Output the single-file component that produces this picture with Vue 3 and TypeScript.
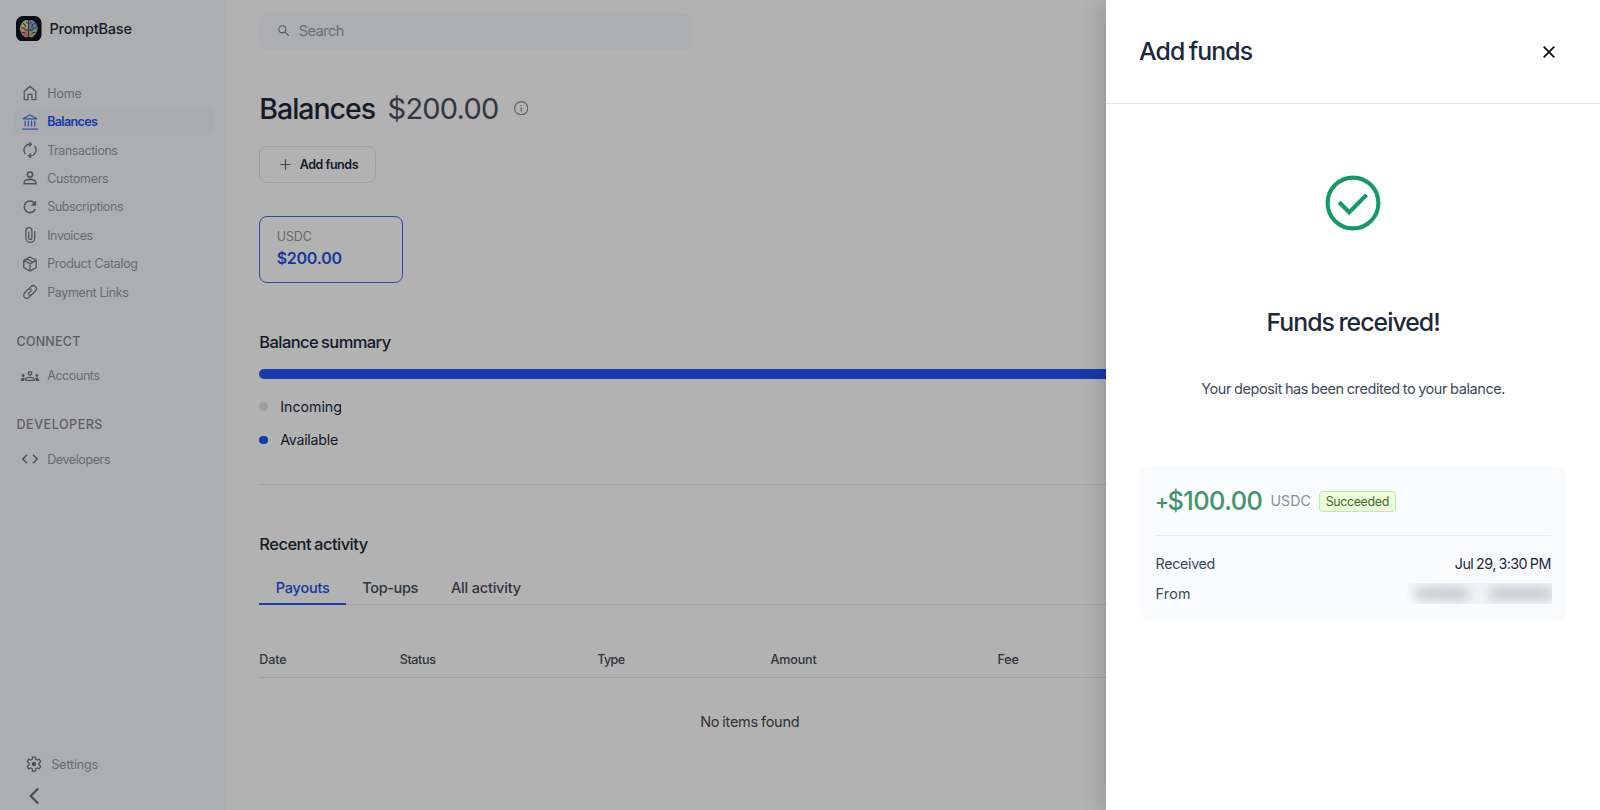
<script setup lang="ts">
interface NavItem {
  label: string
  icon: string
  tracking: number
  active?: boolean
}

const nav: NavItem[] = [
  { label: 'Home', icon: 'home', tracking: -0.1 },
  { label: 'Balances', icon: 'bank', tracking: -0.62, active: true },
  { label: 'Transactions', icon: 'sync', tracking: -0.46 },
  { label: 'Customers', icon: 'person', tracking: -0.34 },
  { label: 'Subscriptions', icon: 'refresh', tracking: -0.39 },
  { label: 'Invoices', icon: 'clip', tracking: -0.42 },
  { label: 'Product Catalog', icon: 'box', tracking: -0.32 },
  { label: 'Payment Links', icon: 'link', tracking: -0.36 },
]

const columns = ['Date', 'Status', 'Type', 'Amount', 'Fee']
const tabs = [
  { label: 'Payouts', tracking: -0.22 },
  { label: 'Top-ups', tracking: -0.38 },
  { label: 'All activity', tracking: -0.18 },
]
</script>

<template>
  <div class="page">
    <aside class="sidebar">
      <div class="brand">
        <svg class="logo" viewBox="0 0 26 26">
          <defs>
            <linearGradient id="brain" x1=".3" y1="0" x2=".6" y2="1">
              <stop offset="0" stop-color="#6fd3b4" />
              <stop offset=".35" stop-color="#e8dc9c" />
              <stop offset=".65" stop-color="#e8b09a" />
              <stop offset="1" stop-color="#ee7a80" />
            </linearGradient>
            <linearGradient id="brain2" x1=".3" y1="0" x2=".6" y2="1">
              <stop offset="0" stop-color="#b59be0" />
              <stop offset=".4" stop-color="#7fa6e0" />
              <stop offset=".65" stop-color="#8fd0a0" />
              <stop offset="1" stop-color="#f0a070" />
            </linearGradient>
          </defs>
          <rect width="26" height="26" rx="7" fill="#12121f" />
          <path d="M12.6 4.4 9.4 4 6.6 6.2 4.8 9.4 3.8 12.6 4.8 16 6.6 19.4 9.4 21.8 12.6 21.4z" fill="url(#brain)" />
          <path d="M13.4 4.4 16.6 4 19.4 6.2 21.2 9.4 22.2 12.6 21.2 16 19.4 19.4 16.6 21.8 13.4 21.4z" fill="url(#brain2)" />
          <path d="M7 7.5l2.4 1.6v2.4M4.6 12.2h3.2l1.6 2.2h2.8M6.2 16.8h2.6l1.2 2M10.2 6.4l2 1.2M18.8 7.5l-2.4 1.6v2.4M21.4 12.2h-3.2l-1.6 2.2h-2.8M19.8 16.8h-2.6l-1.2 2M15.8 6.4l-2 1.2" fill="none" stroke="#1b1b2a" stroke-width=".8" />
        </svg>
        <span>PromptBase</span>
      </div>

      <nav class="nav">
        <a v-for="item in nav" :key="item.label" class="item" :class="{ active: item.active }">
          <svg v-if="item.icon === 'home'" class="ico" viewBox="0 0 16 16"><path d="M2.2 6.3 8 1.4l5.8 4.9v8.3H9.9V9.3H6.1v5.3H2.2z" /></svg>
          <svg v-else-if="item.icon === 'bank'" class="ico" viewBox="0 0 16 16"><path d="M1 4.8 8 1l7 3.8zM3.2 6.8v5.8M6.4 6.8v5.8M9.6 6.8v5.8M12.8 6.8v5.8M.2 15.2h15.6" /></svg>
          <svg v-else-if="item.icon === 'sync'" class="ico" viewBox="0 0 16 16"><path d="M8.8 2.2A6 6 0 0 0 3.4 12M7 0l2.4 2.2L7 4.6M7.2 13.8a6 6 0 0 0 5.4-9.8M9 11.4l-2.4 2.4L9 16" /></svg>
          <svg v-else-if="item.icon === 'person'" class="ico bold" viewBox="0 0 16 16"><circle cx="8" cy="4.6" r="2.6" /><path d="M2.2 13.8v-1.5c0-2 3.6-2.9 5.8-2.9s5.8.9 5.8 2.9v1.5z" /></svg>
          <svg v-else-if="item.icon === 'refresh'" class="ico bold" viewBox="0 0 16 16"><path d="M13.4 10a5.8 5.8 0 1 1-1.2-6.2l1 1" /><path d="M14.1 1.4v5.4H8.7z" class="solid" /></svg>
          <svg v-else-if="item.icon === 'clip'" class="ico" viewBox="0 0 16 16"><path d="M12.4 4v7a4.4 4.4 0 0 1-8.8 0V3.7a3 3 0 0 1 6 0V11a1.6 1.6 0 0 1-3.2 0V4.4" transform="translate(.3)" /></svg>
          <svg v-else-if="item.icon === 'box'" class="ico" viewBox="0 0 16 16"><path d="M8 1 14.2 4.4v7.2L8 15 1.8 11.6V4.4zM1.8 4.4 8 7.8l6.2-3.4M8 7.8V15M4.6 2.9l6.3 3.4" /></svg>
          <svg v-else class="ico" viewBox="0 0 16 16"><path d="M6.7 4.9 9 2.6a3.1 3.1 0 0 1 4.4 4.4L10.2 10.2a3.1 3.1 0 0 1-3.6.5M9.3 11.1 7 13.4A3.1 3.1 0 0 1 2.6 9l3.2-3.2a3.1 3.1 0 0 1 3.6-.5M5.9 10.1l4.2-4.2" /></svg>
          <span :style="{ letterSpacing: item.tracking + 'px' }">{{ item.label }}</span>
        </a>
      </nav>

      <h4 class="group connect">CONNECT</h4>
      <a class="item">
        <svg class="ico wide bold" viewBox="0 0 20 16"><circle cx="10" cy="5.3" r="1.7" /><path d="M5.8 12.4v-.9c0-1.5 2.5-2.1 4.2-2.1s4.2.6 4.2 2.1v.9z" /><path d="M.8 12.9h3.5v-1.6l.7-1.6-2-.2-2.2 1.4zM15.7 12.9h3.5v-2l-2.2-1.4-2 .2.7 1.6z" class="solid" /><circle cx="3.1" cy="7.5" r="1.4" class="solid" /><circle cx="16.9" cy="7.5" r="1.4" class="solid" /></svg>
        <span class="t-acc">Accounts</span>
      </a>
      <h4 class="group devs">DEVELOPERS</h4>
      <a class="item">
        <svg class="ico bold" viewBox="0 0 16 16"><path d="M5 3.8.8 8 5 12.2M11 3.8 15.2 8 11 12.2" /></svg>
        <span class="t-dev">Developers</span>
      </a>

      <div class="foot">
        <a class="settings">
          <svg class="ico" viewBox="0 0 16 16"><path d="M6.6 1h2.8l.4 2.2 1.4.8 2.1-.8 1.4 2.4L13 7.1v1.8l1.7 1.5-1.4 2.4-2.1-.8-1.4.8L9.4 15H6.6l-.4-2.2-1.4-.8-2.1.8-1.4-2.4L3 8.9V7.1L1.3 5.6l1.4-2.4 2.1.8 1.4-.8z" /><circle cx="8" cy="8" r="2.2" class="solid" /></svg>
          <span>Settings</span>
        </a>
        <svg class="collapse" viewBox="0 0 12 18"><path d="M10.2 1.5 2.7 9l7.5 7.5" /></svg>
      </div>
    </aside>

    <main class="main">
      <div class="search">
        <svg viewBox="0 0 12 12"><circle cx="4.5" cy="4.5" r="3.7" /><path d="m7.2 7.2 4.2 4.2" /></svg>
        <span>Search</span>
      </div>

      <div class="title">
        <h1>Balances</h1>
        <span class="total">$200.00</span>
        <svg class="info" viewBox="0 0 14 14"><circle cx="7" cy="7" r="6.4" /><path d="M7 6.1v4M7 3.8v1.1" /></svg>
      </div>

      <button class="add">
        <svg viewBox="0 0 12 12"><path d="M6 .4v11.2M.4 6h11.2" /></svg>
        <span>Add funds</span>
      </button>

      <section class="currency">
        <span class="code">USDC</span>
        <strong>$200.00</strong>
      </section>

      <h2 class="summary">Balance summary</h2>
      <div class="bar"></div>
      <div class="legend"><i class="dot grey"></i><span class="inc">Incoming</span></div>
      <div class="legend"><i class="dot"></i><span class="ava">Available</span></div>

      <hr class="rule" />

      <h2 class="recent">Recent activity</h2>
      <div class="tabs">
        <span v-for="(tab, i) in tabs" :key="tab.label" class="tab" :class="{ on: i === 0 }" :style="{ letterSpacing: tab.tracking + 'px' }">{{ tab.label }}</span>
      </div>

      <div class="thead">
        <span v-for="c in columns" :key="c" :class="'c-' + c.toLowerCase()">{{ c }}</span>
      </div>
      <p class="empty">No items found</p>
    </main>

    <div class="overlay"></div>

    <section class="drawer">
      <header>
        <h2>Add funds</h2>
        <svg viewBox="0 0 12 12"><path d="m.7.7 10.6 10.6M11.3.7.7 11.3" /></svg>
      </header>
      <div class="body">
        <svg class="check" viewBox="0 0 56 56"><circle cx="28" cy="28" r="25.4" /><path d="M14.2 27.3 24.2 37.3 41.6 19.9" /></svg>
        <h3>Funds received!</h3>
        <p class="note">Your deposit has been credited to your balance.</p>
        <div class="receipt">
          <div class="amount">
            <strong><span class="plus">+</span>$100.00</strong>
            <span class="cur">USDC</span>
            <span class="badge">Succeeded</span>
          </div>
          <div class="line">
            <span class="rec">Received</span>
            <span class="when">Jul 29, 3:30 PM</span>
          </div>
          <div class="line">
            <span class="from">From</span>
            <span class="hidden"><i class="b1"></i><i class="b2"></i></span>
          </div>
        </div>
      </div>
    </section>
  </div>
</template>

<style scoped>
.page {
  position: relative;
  display: flex;
  width: 1600px;
  height: 810px;
  overflow: hidden;
  background: #fff;
  color: #1e293b;
  font-family: Inter, "Liberation Sans", sans-serif;
}
.page * { box-sizing: border-box; }
h1, h2, h3, h4, p { margin: 0; font-weight: 500; }
svg { display: block; flex: none; fill: none; stroke: currentColor; }

.sidebar {
  display: flex;
  flex-direction: column;
  width: 227px;
  padding: 15.5px 12.5px 0;
  background: #f8fafc;
  border-right: 1px solid #f5f7f9;
  font-size: 12.5px;
}
.brand {
  display: flex;
  align-items: center;
  gap: 8px;
  height: 26px;
  padding-left: 3.5px;
  font-size: 14.5px;
  font-weight: 500;
  letter-spacing: -0.2px;
  color: #1e293b;
}
.brand span { margin-top: -1px; }
.logo { width: 25.5px; height: 25.5px; stroke: none; }
.nav { display: flex; flex-direction: column; margin-top: 38.6px; }
.item {
  display: flex;
  align-items: center;
  height: 26.4px;
  margin-bottom: 2px;
  padding-left: 9.5px;
  border-radius: 8px;
  color: #969aa1;
}
.item .ico { width: 16px; height: 16px; margin-right: 9.2px; color: #75777a; stroke-width: 1.25; }
.item .ico.bold { stroke-width: 1.6; }
.item .ico.wide { width: 20px; margin: 0 7.2px 0 -2px; stroke-width: 1.4; }
.solid { fill: currentColor; stroke: none; }
.item.active { background: #f2f5fb; color: #2153f5; font-weight: 600; }
.item.active .ico { color: #4b78ea; }
.group { padding-left: 4px; height: 16px; line-height: 16px; font-size: 12.5px; color: #85898f; }
.connect { margin-top: 26.5px; letter-spacing: 0.22px; }
.connect + .item { margin-top: 13px; }
.devs { margin-top: 26px; letter-spacing: 0.55px; }
.devs + .item { margin-top: 13px; }
.t-acc { letter-spacing: -0.42px; }
.t-dev { letter-spacing: -0.4px; }
.foot { margin-top: auto; padding-left: 13.5px; }
.settings { display: flex; align-items: center; gap: 9.5px; color: #969aa1; letter-spacing: -0.18px; }
.settings .ico { width: 16px; height: 16px; color: #6c6e70; stroke-width: 1.25; }
.collapse { width: 12px; height: 18px; margin: 15px 0 5px 2px; color: #6c6c6c; stroke-width: 2.2; }

.main { display: flex; flex-direction: column; align-items: flex-start; width: 1013px; padding: 12.5px 0 0 32.3px; }
.search {
  display: flex;
  align-items: center;
  gap: 9.5px;
  width: 432.5px;
  height: 37px;
  padding: 0 0 1.5px 18.5px;
  border-radius: 8px;
  background: #f6f9fb;
  color: #9b9fa4;
  font-size: 14.5px;
  letter-spacing: -0.5px;
}
.search svg { width: 11.5px; height: 11.5px; color: #7a7c7f; stroke-width: 1.1; }
.title { display: flex; align-items: center; height: 40px; margin-top: 38.5px; }
.title h1 { font-size: 28.5px; letter-spacing: -1.02px; }
.total { margin-left: 12.5px; font-size: 29px; letter-spacing: -0.79px; color: #495060; }
.info { width: 14.5px; height: 14.5px; margin-left: 15.5px; color: #8a8a8c; stroke-width: 1.1; }
.add {
  display: flex;
  align-items: center;
  gap: 8.5px;
  width: 117px;
  height: 37px;
  margin-top: 18px;
  padding: 0 0 0 20px;
  border: 1px solid #e2e4e8;
  border-radius: 8px;
  background: transparent;
  color: #1e293b;
  font: 600 12.5px Inter, sans-serif;
  letter-spacing: -0.44px;
  word-spacing: -0.2px;
}
.add svg { width: 11px; height: 11px; color: #666; stroke-width: 1.3; }
.currency {
  display: flex;
  flex-direction: column;
  width: 144px;
  height: 67px;
  margin-top: 33px;
  padding: 10.9px 16.4px;
  border: 1.5px solid #3d68ee;
  border-radius: 8px;
}
.code { font-size: 12.5px; line-height: 18px; letter-spacing: -0.1px; color: #96999e; }
.currency strong { font-size: 16px; line-height: 25px; font-weight: 600; letter-spacing: -0.25px; color: #2550e0; }
.summary, .recent { font-size: 16.5px; line-height: 24px; word-spacing: -0.8px; }
.summary { margin-top: 47px; letter-spacing: -0.59px; }
.bar { width: 981px; height: 10.5px; margin-top: 14.7px; border-radius: 6px; background: #2153f5; }
.legend { display: flex; align-items: center; gap: 12.4px; height: 20px; font-size: 14.2px; }
.bar + .legend { margin-top: 17.2px; }
.legend + .legend { margin-top: 13.4px; }
.dot { width: 8.5px; height: 8.5px; border-radius: 50%; background: #2153f5; }
.dot.grey { background: #e4e4ea; }
.ava { letter-spacing: -0.24px; }
.rule { width: 981px; height: 1px; margin: 34.1px 0 0; border: 0; background: #e2e4e8; }
.recent { margin-top: 47px; letter-spacing: -0.53px; }
.tabs { display: flex; width: 981px; height: 40px; margin-top: 9px; box-shadow: inset 0 -1px #e2e4e8; }
.tab { height: 40px; padding: 0 16.5px; line-height: 45.5px; font-size: 14.5px; font-weight: 500; color: #464c58; }
.tab.on { width: 86.5px; color: #2550e0; border-bottom: 2px solid #2f5ee8; }
.thead {
  display: grid;
  grid-template-columns: 140.4px 197.5px 173.3px 227px 1fr;
  width: 981px;
  height: 36px;
  margin-top: 37px;
  line-height: 36px;
  border-bottom: 1px solid #e2e4e8;
  font-size: 12.5px;
  font-weight: 500;
  color: #454b57;
  letter-spacing: -0.1px;
}
.c-status { letter-spacing: -0.36px; }
.c-amount { letter-spacing: -0.12px; }
.c-type { letter-spacing: -0.6px; }
.empty { width: 981px; margin-top: 33.8px; text-align: center; font-size: 14.5px; line-height: 20px; font-weight: 400; letter-spacing: -0.24px; word-spacing: -0.9px; color: #414853; }

.overlay { position: absolute; inset: 0; background: rgba(0, 0, 0, 0.3); }

.drawer {
  position: absolute;
  top: 0;
  right: 0;
  bottom: 0;
  width: 494px;
  background: #fff;
  box-shadow: 0 0 24px rgba(0, 0, 0, 0.22);
}
.drawer header {
  display: flex;
  align-items: center;
  justify-content: space-between;
  height: 104px;
  padding: 0 45.5px 1px 33px;
  border-bottom: 1px solid #e5e6e8;
}
.drawer h2, .drawer h3 { font-size: 24.8px; line-height: 32px; word-spacing: -1.2px; }
.drawer h2 { letter-spacing: -0.92px; }
.drawer header svg { width: 12px; height: 12px; margin-top: 1px; color: #0c0c0c; stroke-width: 1.7; }
.body { display: flex; flex-direction: column; align-items: center; padding: 71px 32.7px 0 33px; }
.check { width: 56px; height: 56px; color: #15996a; stroke-width: 4.1; }
.drawer h3 { margin-top: 75px; letter-spacing: -0.97px; }
.note { margin-top: 40px; font-size: 14.5px; line-height: 22px; font-weight: 400; letter-spacing: -0.41px; word-spacing: -0.7px; color: #414a5a; }
.receipt { width: 100%; height: 155px; margin-top: 66px; padding: 0 16.5px; border-radius: 10px; background: #f9fbfd; }
.amount { display: flex; align-items: center; height: 70px; margin-bottom: 13.3px; border-bottom: 1px solid #e6eaee; }
.amount strong { width: 107px; font-size: 25.3px; font-weight: 500; letter-spacing: -0.53px; color: #42946c; margin: -1px 0 0 -0.5px; white-space: nowrap; }
.plus { display: inline-block; margin-right: -1px; font-size: 21px; transform: translateY(-1.5px); }
.cur { margin-left: 8.5px; font-size: 14.2px; color: #8d909d; }
.badge {
  width: 77px;
  height: 21px;
  margin: 1px 0 0 8px;
  border: 1px solid #c3ee9d;
  border-radius: 4px;
  background: #edfddd;
  color: #3f7224;
  font-size: 12.5px;
  line-height: 19px;
  text-align: center;
  letter-spacing: -0.4px;
}
.line { display: flex; align-items: center; justify-content: space-between; height: 29.4px; font-size: 14.3px; color: #414a5a; }
.rec { letter-spacing: -0.33px; }
.from { letter-spacing: 0.25px; }
.when { color: #1e293b; letter-spacing: -0.55px; word-spacing: -0.7px; }
.hidden { display: flex; width: 145px; height: 21px; margin-right: -1.5px; gap: 22px; align-items: center; overflow: hidden; padding-left: 8px; background: linear-gradient(90deg, #f9fbfd, #f3f4f6 30%); }
.hidden i { height: 11px; background: #bfc1c5; filter: blur(6px); }
.b1 { width: 55px; }
.b2 { width: 66px; }
</style>
